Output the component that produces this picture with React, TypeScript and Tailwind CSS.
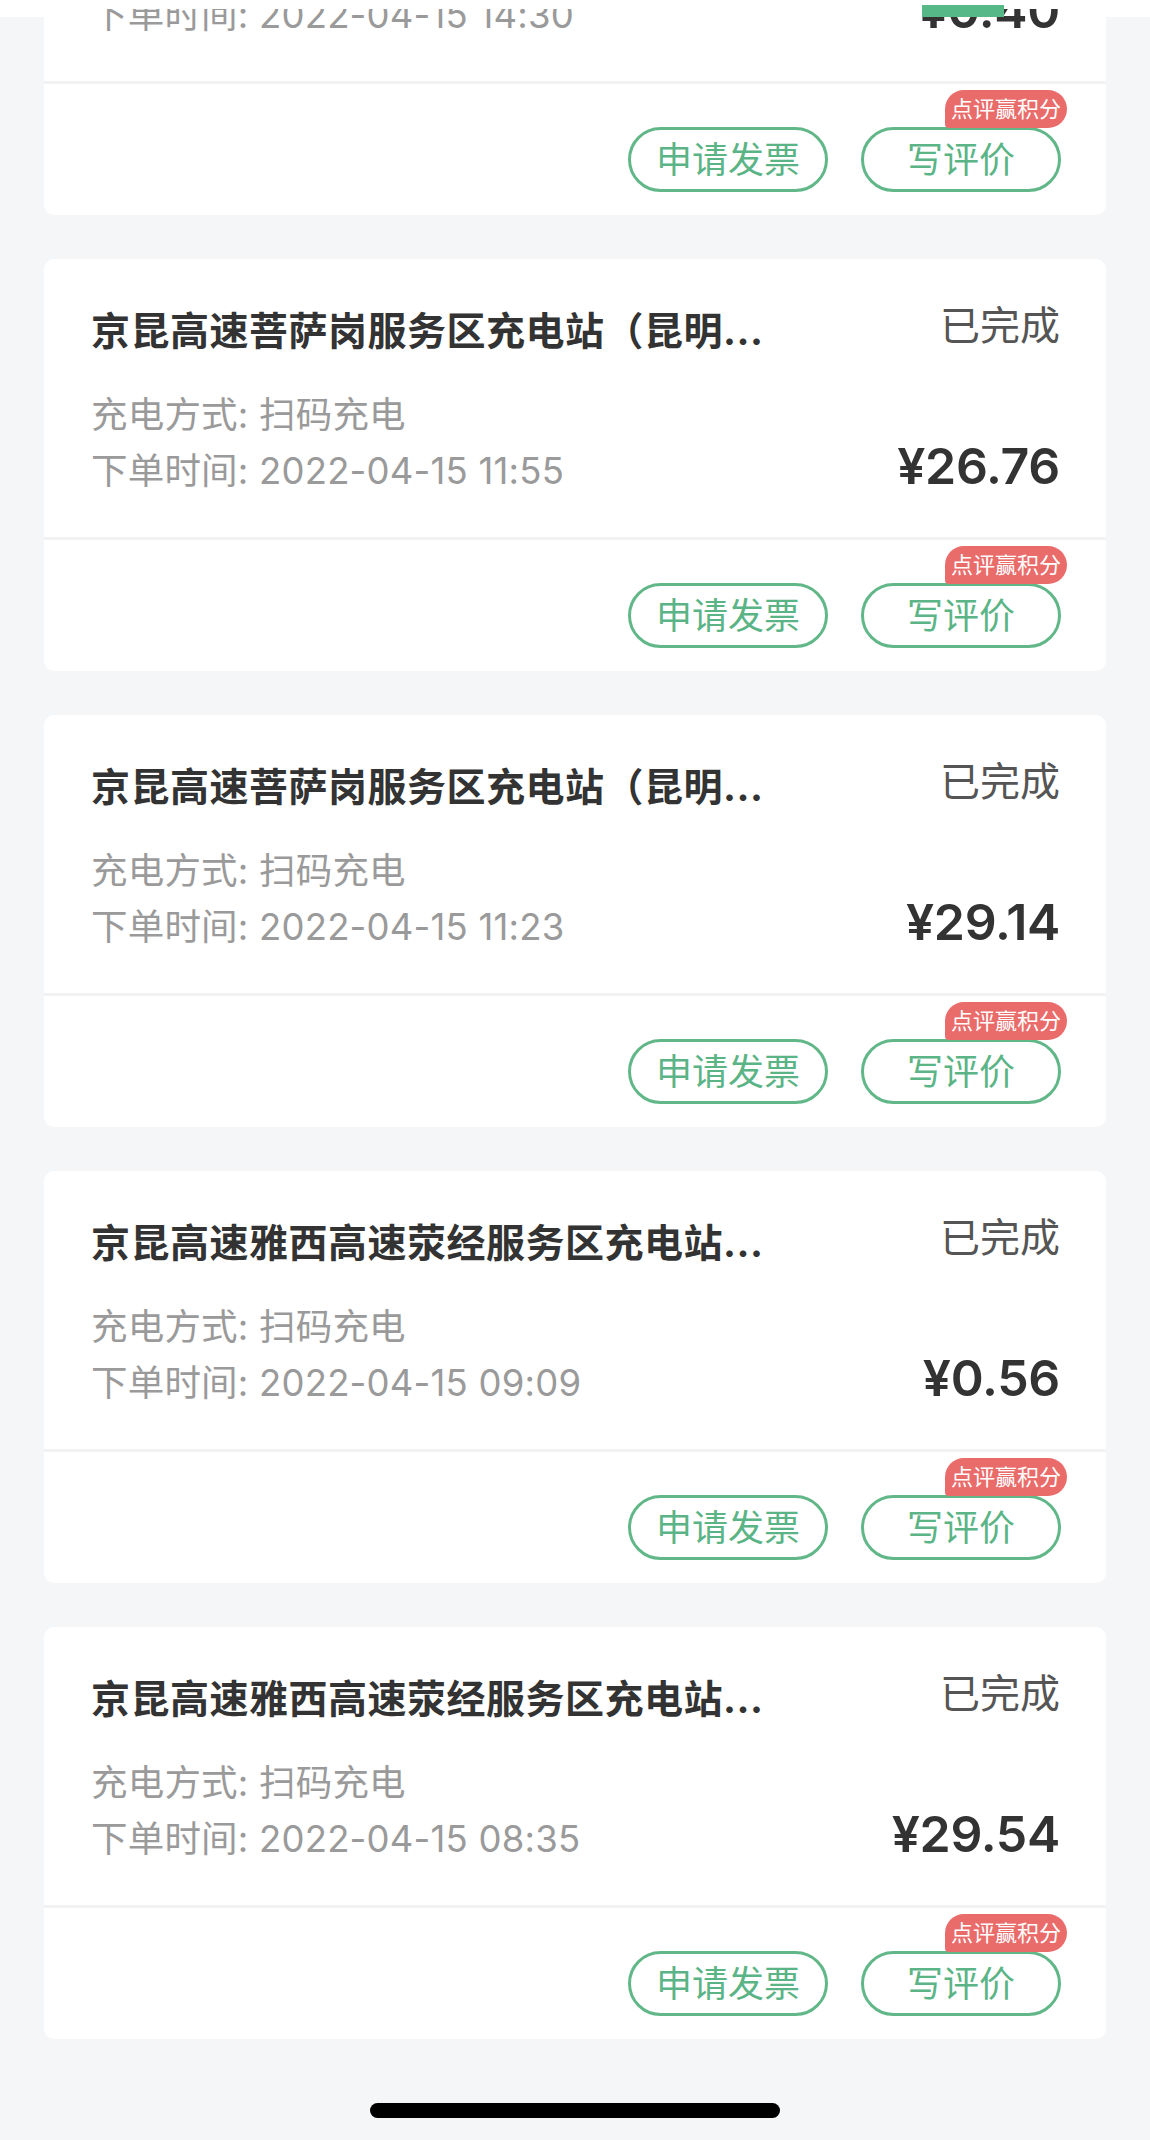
import React from "react";

type Order = { title: string; time: string; price: string };

const orders: Order[] = [
  { title: "京昆高速雅西高速荥经服务区充电站...", time: "2022-04-15 14:30", price: "¥0.40" },
  { title: "京昆高速菩萨岗服务区充电站（昆明...", time: "2022-04-15 11:55", price: "¥26.76" },
  { title: "京昆高速菩萨岗服务区充电站（昆明...", time: "2022-04-15 11:23", price: "¥29.14" },
  { title: "京昆高速雅西高速荥经服务区充电站...", time: "2022-04-15 09:09", price: "¥0.56" },
  { title: "京昆高速雅西高速荥经服务区充电站...", time: "2022-04-15 08:35", price: "¥29.54" },
];

function OrderCard({ o }: { o: Order }) {
  return (
    <div className="h-[412px] shrink-0 rounded-[10px] bg-white overflow-hidden flex flex-col">
      <div className="pl-[47px] pr-[46px] pt-[50px] pb-[38px]">
        <div className="flex items-start justify-between">
          <div className="text-[39px] leading-[44px] font-bold tracking-[0.5px] text-[#333333] whitespace-nowrap">
            {o.title}
          </div>
          <div className="text-[40px] leading-[34px] text-[#555555] whitespace-nowrap">已完成</div>
        </div>
        <div className="mt-[34px] flex items-end justify-between">
          <div className="text-[36.5px] leading-[56px] tracking-[0.2px] text-[#9a9a9a] whitespace-nowrap">
            <div>充电方式: 扫码充电</div>
            <div>下单时间: {o.time}</div>
          </div>
          <div className="mb-[8px] text-[50px] leading-[50px] font-semibold text-[#333333] tracking-[-0.3px]">
            {o.price}
          </div>
        </div>
      </div>
      <div className="h-[3px] bg-[#f1f2f4]" />
      <div className="flex justify-end gap-[33px] pr-[45px] pt-[43px]">
        <button className="w-[200px] h-[65px] rounded-full border-[3px] border-[#62b789] text-[36px] leading-none text-[#5bb485] flex items-center justify-center">
          申请发票
        </button>
        <div className="relative">
          <button className="w-[200px] h-[65px] rounded-full border-[3px] border-[#62b789] text-[36px] leading-none text-[#5bb485] flex items-center justify-center">
            写评价
          </button>
          <div className="absolute top-[-37px] right-[-6px] h-[38px] w-[122px] rounded-tl-[19px] rounded-tr-[19px] rounded-br-[19px] rounded-bl-[4px] bg-[#e96c6b] text-white text-[22px] leading-none flex items-center justify-center">
            点评赢积分
          </div>
        </div>
      </div>
    </div>
  );
}

export default function App() {
  return (
    <div className="relative h-[2140px] w-[1150px] overflow-hidden bg-[#f5f6f8] font-['Inter','Noto_Sans_CJK_SC',sans-serif]">
      <div className="h-[17px] bg-white" />
      <div className="-mt-[214px] px-[44px] flex flex-col gap-[44px]">
        {orders.map((o, i) => (
          <OrderCard key={i} o={o} />
        ))}
        <div className="mt-[20px] mx-auto w-[410px] h-[15px] rounded-full bg-black" />
      </div>
      <div className="absolute top-0 left-0 right-0 h-[9px] bg-white" />
      <div className="absolute top-[5px] left-[922px] w-[82px] h-[12px] bg-[#55b886]" />
    </div>
  );
}
